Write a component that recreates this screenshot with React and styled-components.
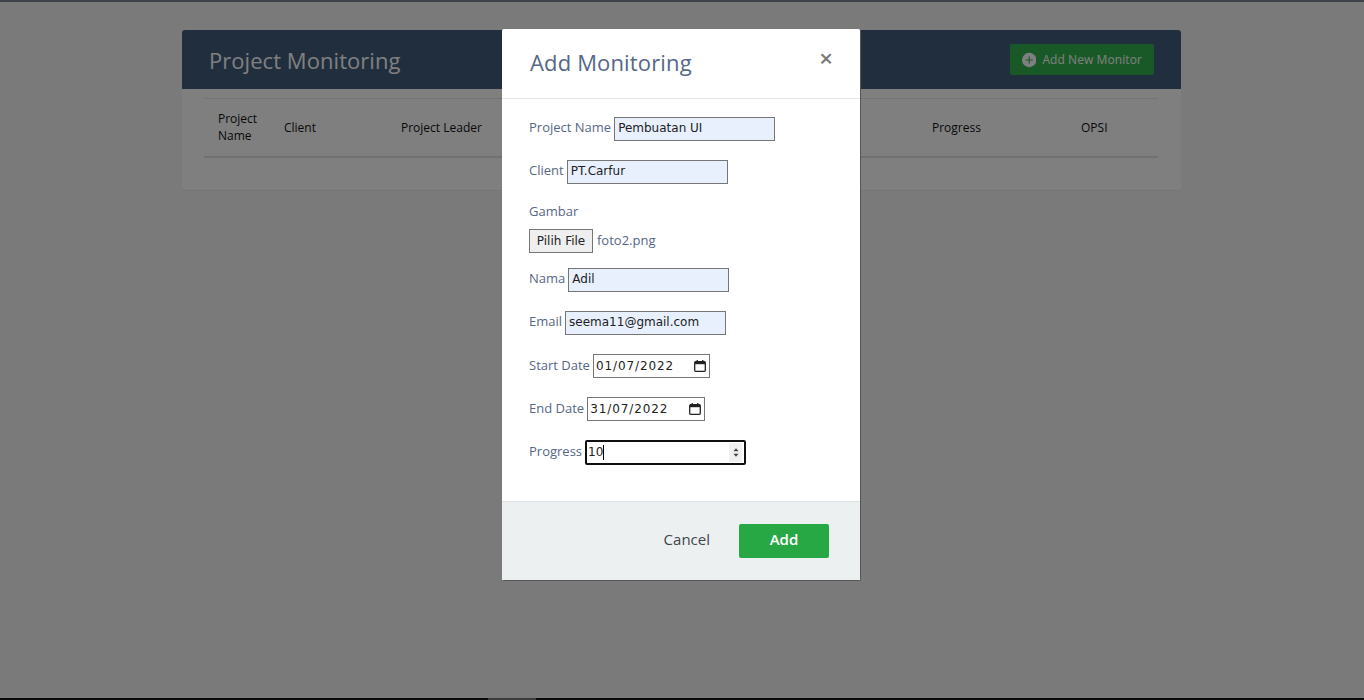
import React from 'react';
import styled, { createGlobalStyle } from 'styled-components';

const fields = [
    { label: 'Project Name', value: 'Pembuatan UI' },
    { label: 'Client', value: 'PT.Carfur' },
];

const contactFields = [
    { label: 'Nama', value: 'Adil' },
    { label: 'Email', value: 'seema11@gmail.com' },
];

const dateFields = [
    { label: 'Start Date', value: '01/07/2022', width: '117px' },
    { label: 'End Date', value: '31/07/2022', width: '118px' },
];

const CalendarIcon = () => (
    <svg width="12" height="12" viewBox="0 0 12 12" fill="none">
        <rect x="0.7" y="1.7" width="10.6" height="9.6" rx="1" stroke="#222" strokeWidth="1.3" />
        <rect x="1" y="2" width="10" height="2.2" fill="#222" />
        <rect x="2.6" y="0" width="1.3" height="2" fill="#222" />
        <rect x="8.1" y="0" width="1.3" height="2" fill="#222" />
    </svg>
);

const SpinIcon = () => (
    <svg width="6" height="11" viewBox="0 0 6 11">
        <path d="M3 1.2 L5.6 4.2 H0.4 Z" fill="#444" />
        <path d="M3 9.8 L5.6 6.8 H0.4 Z" fill="#444" />
    </svg>
);

const PlusIcon = () => (
    <svg width="16" height="16" viewBox="0 0 16 16">
        <circle cx="8" cy="8" r="8" fill="#fff" />
        <path d="M8 4 V12 M4 8 H12" stroke="#33b34f" strokeWidth="1.3" />
    </svg>
);

const App = () => (
    <>
        <GlobalStyle />
        <Card>
            <CardHeader>
                <CardTitle>Project Monitoring</CardTitle>
                <AddNewButton><PlusIcon />Add New Monitor</AddNewButton>
            </CardHeader>
            <TableHead>
                <HeadCell>Project Name</HeadCell>
                <HeadCell>Client</HeadCell>
                <HeadCell>Project Leader</HeadCell>
                <HeadCell>Progress</HeadCell>
                <HeadCell>OPSI</HeadCell>
            </TableHead>
        </Card>

        <Backdrop>
            <TopEdge />
            <BottomEdge><BottomTab /></BottomEdge>
            <Modal>
                <ModalHeader>
                    <ModalTitle>Add Monitoring</ModalTitle>
                    <CloseButton>×</CloseButton>
                </ModalHeader>
                <ModalBody>
                    {fields.map(({ label, value }) => (
                        <FormRow key={label}>
                            <FieldLabel>{label}</FieldLabel>
                            <TextField defaultValue={value} />
                        </FormRow>
                    ))}
                    <FileGroup>
                        <FieldLabel>Gambar</FieldLabel>
                        <FileRow>
                            <FileButton>Pilih File</FileButton>
                            <FileName>foto2.png</FileName>
                        </FileRow>
                    </FileGroup>
                    {contactFields.map(({ label, value }) => (
                        <FormRow key={label}>
                            <FieldLabel>{label}</FieldLabel>
                            <TextField defaultValue={value} />
                        </FormRow>
                    ))}
                    {dateFields.map(({ label, value, width }) => (
                        <FormRow key={label}>
                            <FieldLabel $centered>{label}</FieldLabel>
                            <DateField $width={width}>
                                <DateText>{value}</DateText>
                                <CalendarIcon />
                            </DateField>
                        </FormRow>
                    ))}
                    <FormRow>
                        <FieldLabel $centered>Progress</FieldLabel>
                        <NumberField>
                            <span>10</span>
                            <Caret />
                            <Spinner><SpinIcon /></Spinner>
                        </NumberField>
                    </FormRow>
                </ModalBody>
                <ModalFooter>
                    <CancelButton>Cancel</CancelButton>
                    <SubmitButton>Add</SubmitButton>
                </ModalFooter>
            </Modal>
        </Backdrop>
    </>
);

export default App;

const GlobalStyle = createGlobalStyle`
    html, body {
        margin: 0;
        height: 100%;
        overflow: hidden;
        background: #f5f5f5;
        font-family: "Open Sans", "Liberation Sans", sans-serif;
    }
    * {
        box-sizing: border-box;
    }
`;

const Card = styled.section`
    width: 999px;
    height: 160px;
    margin: 30px 0 0 182px;
    background: #fff;
    border-radius: 3px;
    box-shadow: 0 1px 1px rgba(0, 0, 0, .05);
`;

const CardHeader = styled.header`
    display: flex;
    align-items: center;
    justify-content: space-between;
    height: 59px;
    padding: 0 27px;
    background: #435d7d;
    border-radius: 3px 3px 0 0;
`;

const CardTitle = styled.h2`
    margin: 0;
    font-size: 22px;
    font-weight: 400;
    letter-spacing: .05px;
    color: #fff;
`;

const AddNewButton = styled.button`
    display: flex;
    align-items: center;
    gap: 6px;
    width: 144px;
    height: 31px;
    padding: 0 12px;
    border: 0;
    border-radius: 2px;
    background: #33b34f;
    color: #fff;
    font-family: inherit;
    font-size: 12px;
    letter-spacing: .08px;
    white-space: nowrap;
`;

const TableHead = styled.div`
    display: grid;
    grid-template-columns: 66px 117px 531px 149px 1fr;
    align-items: center;
    height: 60px;
    margin: 9px 23px 0 22px;
    padding: 0 0 1px 14px;
    border-top: 1px solid #e9e9e9;
    border-bottom: 2px solid #dee2e6;
`;

const HeadCell = styled.div`
    font-size: 12px;
    line-height: 17px;
    color: #111;
`;

const Backdrop = styled.div`
    position: fixed;
    inset: 0;
    display: flex;
    justify-content: center;
    padding: 29px 1px 0 0;
    background: rgba(0, 0, 0, .5);
`;

const TopEdge = styled.div`
    position: absolute;
    top: 0;
    left: 0;
    right: 0;
    height: 2px;
    background: #3f4249;
`;

const BottomEdge = styled.div`
    position: absolute;
    left: 0;
    right: 0;
    bottom: 0;
    height: 2px;
    background: #0a0a0a;
`;

const BottomTab = styled.div`
    position: absolute;
    left: 488px;
    width: 48px;
    height: 2px;
    background: #3c3c3c;
`;

const Modal = styled.div`
    display: flex;
    flex-direction: column;
    width: 359px;
    height: 552px;
    background: #fff;
    border-right: 1px solid #555;
    border-bottom: 1px solid #555;
    border-radius: 2px;
`;

const ModalHeader = styled.div`
    display: flex;
    align-items: flex-start;
    justify-content: space-between;
    height: 70px;
    padding: 17px 27px 0 28px;
    border-bottom: 1px solid #e3e5ea;
`;

const ModalTitle = styled.h4`
    margin: 0;
    font-size: 22px;
    line-height: 32px;
    font-weight: 400;
    letter-spacing: .15px;
    color: #566787;
`;

const CloseButton = styled.span`
    font-size: 24px;
    line-height: 24px;
    font-weight: 600;
    color: #7a7a7a;
`;

const ModalBody = styled.div`
    flex: 1;
    display: flex;
    flex-direction: column;
    padding: 18px 27px 0;
`;

const FormRow = styled.div`
    display: flex;
    align-items: center;
    gap: 3px;
    height: 24px;
    margin-bottom: 19px;
`;

const FieldLabel = styled.label`
    padding-bottom: ${props => props.$centered ? '2px' : '4px'};
    font-size: 13px;
    line-height: 16px;
    color: #566787;
`;

const TextField = styled.input`
    width: 161px;
    height: 24px;
    padding: 0 3px 2px;
    border: 1px solid #767676;
    border-radius: 0;
    outline: 0;
    background: #e8f0fe;
    color: #222;
    font-family: "DejaVu Sans", sans-serif;
    font-size: 12px;
`;

const FileGroup = styled.div`
    display: flex;
    flex-direction: column;
    gap: 6px;
    margin-bottom: 15px;
`;

const FileRow = styled.div`
    display: flex;
    align-items: center;
    gap: 4px;
`;

const FileButton = styled.button`
    width: 64px;
    height: 24px;
    padding: 0;
    border: 1px solid #767676;
    border-radius: 0;
    background: #efefef;
    color: #222;
    font-family: "DejaVu Sans", sans-serif;
    font-size: 12px;
`;

const FileName = styled.span`
    padding-bottom: 2px;
    font-size: 13px;
    color: #566787;
`;

const DateField = styled.div`
    display: flex;
    align-items: center;
    justify-content: space-between;
    width: ${props => props.$width};
    height: 24px;
    padding: 0 3px 0 2px;
    border: 1px solid #767676;
    background: #fff;
    color: #222;
    font-family: "DejaVu Sans", sans-serif;
    font-size: 12px;
`;

const DateText = styled.span`
    letter-spacing: .9px;
`;

const NumberField = styled.div`
    display: flex;
    align-items: center;
    width: 161px;
    height: 25px;
    padding: 0 2px 0 1px;
    border: 2px solid #101010;
    border-radius: 2px;
    background: #fff;
    color: #222;
    font-family: "DejaVu Sans", sans-serif;
    font-size: 12px;
`;

const Caret = styled.i`
    width: 1px;
    height: 15px;
    background: #000;
`;

const Spinner = styled.div`
    display: flex;
    align-items: center;
    justify-content: center;
    width: 13px;
    height: 19px;
    margin-left: auto;
    background: #f0f0f0;
`;

const ModalFooter = styled.div`
    display: flex;
    align-items: center;
    justify-content: flex-end;
    gap: 29px;
    height: 79px;
    padding: 0 31px 0 0;
    background: #ecf0f1;
    border-top: 1px solid #dee2e6;
`;

const CancelButton = styled.span`
    padding-bottom: 4px;
    font-size: 15px;
    color: #3f4549;
`;

const SubmitButton = styled.button`
    width: 90px;
    height: 34px;
    padding: 0 0 5px;
    border: 0;
    border-radius: 2px;
    background: #28a745;
    color: #fff;
    font-family: inherit;
    font-size: 15px;
    font-weight: 600;
`;
